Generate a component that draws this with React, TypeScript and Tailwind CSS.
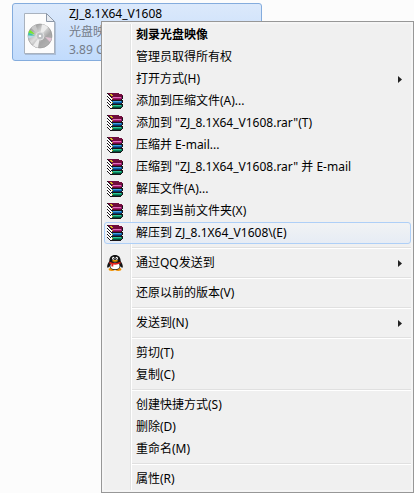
import { Fragment } from "react";

type Item = { label: string; icon?: "rar" | "qq"; submenu?: boolean; bold?: boolean; active?: boolean };

const groups: Item[][] = [
  [
    { label: "刻录光盘映像", bold: true },
    { label: "管理员取得所有权" },
    { label: "打开方式(H)", submenu: true },
    { label: "添加到压缩文件(A)...", icon: "rar" },
    { label: '添加到 "ZJ_8.1X64_V1608.rar"(T)', icon: "rar" },
    { label: "压缩并 E-mail...", icon: "rar" },
    { label: '压缩到 "ZJ_8.1X64_V1608.rar" 并 E-mail', icon: "rar" },
    { label: "解压文件(A)...", icon: "rar" },
    { label: "解压到当前文件夹(X)", icon: "rar" },
    { label: "解压到 ZJ_8.1X64_V1608\\(E)", icon: "rar", active: true },
  ],
  [{ label: "通过QQ发送到", icon: "qq", submenu: true }],
  [{ label: "还原以前的版本(V)" }],
  [{ label: "发送到(N)", submenu: true }],
  [{ label: "剪切(T)" }, { label: "复制(C)" }],
  [{ label: "创建快捷方式(S)" }, { label: "删除(D)" }, { label: "重命名(M)" }],
  [{ label: "属性(R)" }],
];

// 16x16 pixel art, one letter per colour
const rarPixels = [
  "KDDDDDDDDDDD....",
  "WKDYYDDDDDDDDDD.",
  "WWKDYYDDDDDDDDDD",
  "KWWKDDDDDDDDDDDK",
  "WKWWKMPPPPPPPPMK",
  "WWKWWYMMMMMMMMMK",
  "KWWKWDDDDDDDDDK.",
  "WKWWKKKKKKKKKKKK",
  "WWKWWBCCCCCCCCBK",
  "KWWKWYBBBBBBBBBK",
  "WKWWWNNNNNNNNNK.",
  "WWKWKKKKKKKKKKKK",
  "KWWKWGTTTTTTTTGK",
  ".KWWWYGGGGGGGGGK",
  "..KWWFFFFFFFFFK.",
  "...KKKKKKKKKKK..",
];

const rarColors: Record<string, string> = {
  K: "#181418",
  W: "#ffffff",
  Y: "#d8c020",
  D: "#700c3c",
  M: "#a01870",
  P: "#e070b8",
  C: "#40a0e0",
  B: "#0860a8",
  N: "#083868",
  T: "#30c898",
  G: "#088860",
  F: "#045038",
};

function RarIcon() {
  return (
    <svg className="size-4" viewBox="0 0 16 16" shapeRendering="crispEdges" aria-hidden="true">
      {rarPixels.map((row, y) =>
        [...row].map((c, x) =>
          c === "." ? null : <rect key={`${x}-${y}`} x={x} y={y} width="1" height="1" fill={rarColors[c]} />
        )
      )}
    </svg>
  );
}

function QQIcon() {
  return (
    <svg className="size-4" viewBox="0 0 16 16" aria-hidden="true">
      <ellipse cx="4.800" cy="14.300" rx="3.200" ry="1.600" fill="#f09000" />
      <ellipse cx="11.200" cy="14.300" rx="3.200" ry="1.600" fill="#f09000" />
      <path
        d="M8 0C4.400 0 2.200 2.400 2.300 6.300C1 8.200 -0.200 10.500 0.300 12.600C1 13 1.800 12.200 2.400 11.200C3 13.600 5 15 8 15S13 13.600 13.600 11.200C14.200 12.200 15 13 15.700 12.600C16.200 10.500 15 8.200 13.700 6.300C13.800 2.400 11.600 0 8 0Z"
        fill="#141414"
      />
      <ellipse cx="8" cy="11" rx="4.600" ry="3.300" fill="#fff" />
      <ellipse cx="6.300" cy="3.300" rx="1.200" ry="1.500" fill="#fff" />
      <ellipse cx="9.700" cy="3.300" rx="1.200" ry="1.500" fill="#fff" />
      <circle cx="6.800" cy="3.500" r="0.600" fill="#000" />
      <circle cx="9.200" cy="3.500" r="0.600" fill="#000" />
      <ellipse cx="8" cy="5.800" rx="3" ry="0.900" fill="#f5a300" />
      <path d="M2.600 6.800Q8 9.400 13.400 6.800L13.600 8.600Q10 10.200 6.300 9.600V11.600H4.400V9.200L2.300 8.600Z" fill="#e0201c" />
    </svg>
  );
}

function DiscImageIcon() {
  return (
    <svg className="h-[44px] w-[34px] shrink-0" viewBox="0 0 34 44" aria-hidden="true">
      <defs>
        <linearGradient id="disc" x1="0" y1="0" x2="1" y2="1">
          <stop offset="0" stopColor="#989898" />
          <stop offset="0.250" stopColor="#acacac" />
          <stop offset="0.450" stopColor="#dedede" />
          <stop offset="0.650" stopColor="#a6a6a6" />
          <stop offset="1" stopColor="#b8b8b8" />
        </linearGradient>
      </defs>
      <path d="M2 2.500H24L33 10.500V43H2Z" fill="#8d9db3" opacity="0.5" />
      <path d="M1.500 1.500H23.500L31.500 9.500V41.500H1.500Z" fill="#fcfcfc" stroke="#a9b2be" />
      <path d="M23.500 1.500V9.500H31.500Z" fill="#e6ebf2" stroke="#8d98a8" />
      <circle cx="17" cy="24" r="12" fill="url(#disc)" stroke="#909090" strokeWidth="0.6" />
      <path d="M17 24L8 16A12 12 0 0 1 12.500 13Z" fill="#c8c8c8" />
      <path d="M17 24L19 12.200A12 12 0 0 1 25 15.200Z" fill="#ececec" />
      <path d="M17 24L15 35.800A12 12 0 0 1 10 33.500Z" fill="#ececec" />
      <path d="M12 22.300L5.600 20.800A12 12 0 0 1 7 18Z" fill="#74ee20" />
      <path d="M12 23.500L5.200 23.500A12 12 0 0 1 5.600 20.800Z" fill="#30d0a8" />
      <path d="M12 24.500L5.400 26.500A12 12 0 0 1 5.200 23.500Z" fill="#b8d8e8" />
      <path d="M22 25L28.800 26A12 12 0 0 1 27 30Z" fill="#e2c4d4" />
      <circle cx="17" cy="24" r="4" fill="#c0c4c8" stroke="#e0e0e0" />
      <circle cx="17" cy="24" r="1.800" fill="#fff" stroke="#999" strokeWidth="0.5" />
    </svg>
  );
}

function MenuItem({ item }: { item: Item }) {
  return (
    <button
      type="button"
      role="menuitem"
      aria-haspopup={item.submenu ? "menu" : undefined}
      className={`flex h-[22px] w-full items-center rounded-[3px] border pr-2 pl-[2px] text-left whitespace-nowrap ${
        item.active
          ? "border-[#aecff7] bg-linear-to-b from-[#f1f3f5]/80 to-[#e4ebf6]/80"
          : "border-transparent"
      } ${item.bold ? "font-bold" : ""}`}
    >
      <span className="mr-[13px] size-4 shrink-0">
        {item.icon === "rar" && <RarIcon />}
        {item.icon === "qq" && <QQIcon />}
      </span>
      <span className="flex-1">{item.label}</span>
      {item.submenu && (
        <svg className="h-[7px] w-1" viewBox="0 0 4 7" aria-hidden="true">
          <path d="M0 0L4 3.500L0 7Z" fill="#222" />
        </svg>
      )}
    </button>
  );
}

export default function App() {
  return (
    <main className="relative min-h-screen overflow-hidden bg-[#fcfcfc] pt-[3px] pl-3 font-['Noto_Sans','Noto_Sans_CJK_SC',sans-serif] text-[12px] leading-[18px] text-black">
      {/* Selected file */}
      <div className="flex h-[58px] w-[250px] rounded-[3px] border border-[#84acdd] bg-linear-to-b from-[#dce9fb] to-[#c1dbfc] pt-px pl-[10px]">
        <div className="pt-[7px]">
          <DiscImageIcon />
        </div>
        <div className="ml-3 text-[#747c8a]">
          <p className="text-black">ZJ_8.1X64_V1608</p>
          <p>光盘映像文件</p>
          <p>3.89 GB</p>
        </div>
      </div>

      {/* Context menu */}
      <div
        role="menu"
        className="absolute top-[21px] right-0 left-[101px] border border-[#979797] bg-[#f0f0f0] p-[2px] shadow-[inset_0_0_0_2px_#f5f5f5]"
      >
        <div className="absolute inset-y-[2px] left-[28px] w-[2px] border-r border-l border-r-white border-l-[#e2e3e3]" />
        <div className="relative">
          {groups.map((group, i) => (
            <Fragment key={i}>
              {i > 0 && <hr className="my-[3px] ml-[28px] h-[2px] border-t border-b border-t-[#e0e0e0] border-b-white" />}
              {group.map((item) => (
                <MenuItem key={item.label} item={item} />
              ))}
            </Fragment>
          ))}
        </div>
      </div>
    </main>
  );
}
